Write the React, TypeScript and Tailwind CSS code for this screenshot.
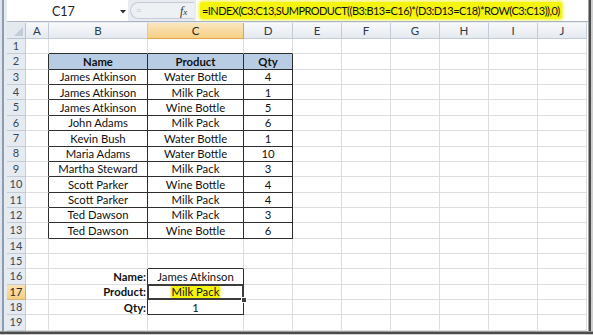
import React from "react";

const COLS = ["A", "B", "C", "D", "E", "F", "G", "H", "I", "J"];
const WIDTHS = ["w-[23px]", "w-[99px]", "w-[96px]", "w-[49px]", "w-[49px]", "w-[49px]", "w-[49px]", "w-[49px]", "w-[49px]", "w-[49px]"];

const DATA: [string, string, string][] = [
  ["James Atkinson", "Water Bottle", "4"],
  ["James Atkinson", "Milk Pack", "1"],
  ["James Atkinson", "Wine Bottle", "5"],
  ["John Adams", "Milk Pack", "6"],
  ["Kevin Bush", "Water Bottle", "1"],
  ["Maria Adams", "Water Bottle", "10"],
  ["Martha Steward", "Milk Pack", "3"],
  ["Scott Parker", "Wine Bottle", "4"],
  ["Scott Parker", "Milk Pack", "4"],
  ["Ted Dawson", "Milk Pack", "3"],
  ["Ted Dawson", "Wine Bottle", "6"],
];

function bordered(r: number, c: number) {
  if (r >= 2 && r <= 13 && c >= 1 && c <= 3) return true;
  if (r >= 16 && r <= 18 && c === 2) return true;
  return false;
}

function cellContent(r: number, c: number): React.ReactNode {
  if (r === 2) {
    if (c === 1) return <span className="font-bold">Name</span>;
    if (c === 2) return <span className="font-bold">Product</span>;
    if (c === 3) return <span className="font-bold">Qty</span>;
  }
  if (r >= 3 && r <= 13 && c >= 1 && c <= 3) return DATA[r - 3][c - 1];
  if (r === 16 && c === 1) return <span className="font-bold">Name:</span>;
  if (r === 17 && c === 1) return <span className="font-bold">Product:</span>;
  if (r === 18 && c === 1) return <span className="font-bold">Qty:</span>;
  if (r === 16 && c === 2) return "James Atkinson";
  if (r === 17 && c === 2)
    return (
      <span className="bg-[#f4f40c] px-[1px] rounded-[2px] shadow-[0_0_2px_1px_#f7f76a]">Milk Pack</span>
    );
  if (r === 18 && c === 2) return "1";
  return null;
}

export default function App() {
  const rows = Array.from({ length: 19 }, (_, i) => i + 1);
  return (
    <div
      className="relative w-[593px] h-[335px] overflow-hidden bg-white flex text-black"
      style={{ fontFamily: "Lato, 'Open Sans', sans-serif" }}
    >
      {/* left window edge */}
      <div className="w-[7px] h-[331px] shrink-0 bg-[#dde4ee] flex">
        <div className="w-[2px]" />
        <div className="w-[2px] bg-[#8e9cb0]" />
        <div className="w-[3px] bg-[#e6ebf2]" />
      </div>

      <div className="w-[586px] shrink-0 flex flex-col">
        <div className="flex">
          <div className="w-[581px] shrink-0 flex flex-col">
            {/* formula bar */}
            <div className="h-[22px] flex border-b border-[#a9b5c4] bg-[#e8ecf1]">
              <div className="w-[121px] shrink-0 h-full bg-white relative">
                <span className="absolute left-[45px] top-[3px] text-[12.5px] text-[#222]">C17</span>
                <svg className="absolute left-[113px] top-[10px]" width="6" height="4" viewBox="0 0 6 4">
                  <path d="M0 0 L6 0 L3 3.5 Z" fill="#333" />
                </svg>
              </div>
              <div className="w-[68px] shrink-0 h-full relative">
                <div className="absolute left-[2px] top-[2px] w-[64px] h-[17px] rounded-l-full border border-r-0 border-[#c3ccd8] bg-[#eef1f4]" />
                <span className="absolute left-[8px] top-[3px] text-[10px] text-[#b9c1cc]">=</span>
                <span
                  className="absolute left-[52px] top-[2px] text-[12px] italic text-[#333]"
                  style={{ fontFamily: "'Liberation Serif', serif" }}
                >
                  f<span className="text-[9px]">x</span>
                </span>
              </div>
              <div className="flex-1 min-w-0 overflow-hidden h-full bg-white flex items-center pl-[4px]">
                <span className="bg-[#f4f40c] rounded-[3px] px-[2px] leading-[17px] text-[11px] tracking-[-0.55px] text-[#111] shadow-[0_0_3px_2px_#f6f66e] whitespace-nowrap">
                  =INDEX(C3:C13,SUMPRODUCT((B3:B13=C16)*(D3:D13=C18)*ROW(C3:C13)),0)
                </span>
              </div>
            </div>
            <div className="h-[1px] bg-[#e8ecf1]" />

            {/* column headers */}
            <div className="flex h-[16px]">
              <div className="w-[19px] shrink-0 h-full bg-[#e4e9ef] border-r border-b border-[#b9c4d2] relative">
                <svg className="absolute right-[2px] bottom-[2px]" width="9" height="9" viewBox="0 0 9 9">
                  <path d="M9 0 L9 9 L0 9 Z" fill="#c2ccd8" />
                </svg>
              </div>
              {COLS.map((c, i) => (
                <div
                  key={c}
                  className={`${WIDTHS[i]} shrink-0 h-full flex items-center justify-center text-[11.5px] border-r border-b ${
                    c === "C"
                      ? "bg-gradient-to-b from-[#fae6bd] to-[#f5cf84] border-r-[#c9aa6c] border-b-[#e0a94a] text-[#2a2a2a]"
                      : "bg-gradient-to-b from-[#f8f9fb] to-[#e5eaf0] border-[#c3ccd7] text-[#2f3b4a]"
                  }`}
                >
                  {c}
                </div>
              ))}
            </div>

            {/* rows */}
            {rows.map((r) => (
              <div key={r} className="flex h-[15.37px]">
                <div
                  className={`w-[19px] shrink-0 h-full flex items-center justify-center text-[11px] border-r border-b ${
                    r === 17
                      ? "bg-gradient-to-b from-[#fae3b4] to-[#f5cd80] border-r-[#e0a94a] border-b-[#d6b57a] text-[#2a2a2a]"
                      : "bg-[#e6ebf1] border-[#c3ccd7] text-[#3a4756]"
                  }`}
                >
                  {r}
                </div>
                {COLS.map((c, ci) => {
                  const rightDark = bordered(r, ci) || bordered(r, ci + 1);
                  const bottomDark = bordered(r, ci) || bordered(r + 1, ci);
                  const isHeader = r === 2 && ci >= 1 && ci <= 3;
                  const isLabel = r >= 16 && r <= 18 && ci === 1;
                  const selected = r === 17 && ci === 2;
                  return (
                    <div
                      key={c}
                      className={`${WIDTHS[ci]} shrink-0 h-full border-r border-b flex items-center text-[11.3px] leading-none whitespace-nowrap text-[#111] ${
                        rightDark ? "border-r-[#2e2e2e]" : "border-r-[#dcdee1]"
                      } ${bottomDark ? "border-b-[#2e2e2e]" : "border-b-[#dcdee1]"} ${
                        isHeader ? "bg-[#b8cce4]" : ""
                      } ${isLabel ? "justify-end pr-[1px]" : "justify-center"} ${selected ? "relative" : ""}`}
                    >
                      {cellContent(r, ci)}
                      {selected && (
                        <>
                          <div className="absolute left-[-1px] top-[-1px] right-[-1px] bottom-[-1px] border-2 border-[#3c3c3c]" />
                          <div className="absolute right-[-4px] bottom-[-4px] w-[6px] h-[6px] bg-[#3c3c3c] border border-white" />
                        </>
                      )}
                    </div>
                  );
                })}
              </div>
            ))}
          </div>
          {/* right frame */}
          <div className="w-[5px] shrink-0 flex">
            <div className="w-[1px] bg-[#a0a0a0]" />
            <div className="w-[2px] bg-[#4b4b4b]" />
            <div className="w-[2px] bg-[#cfcfcf]" />
          </div>
        </div>
      </div>
      <div className="absolute left-0 top-[331px] w-[593px] h-[4px] flex flex-col">
        <div className="h-[1px] bg-[#9a9a9a]" />
        <div className="h-[2px] bg-[#4b4b4b]" />
        <div className="h-[1px] bg-[#cfcfcf]" />
      </div>
    </div>
  );
}
